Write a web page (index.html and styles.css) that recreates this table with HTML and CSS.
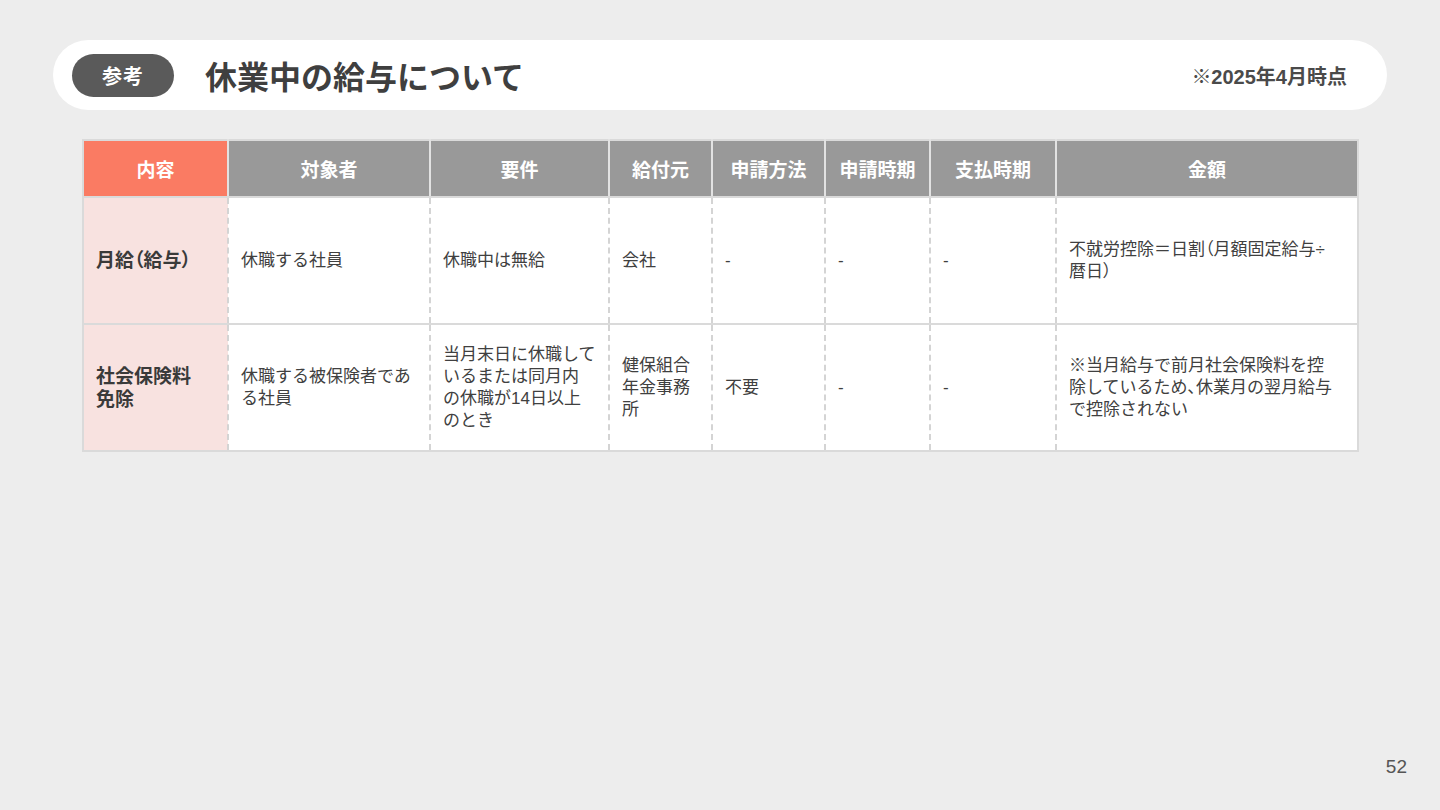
FILE: index.html
```html
<!DOCTYPE html>
<html lang="ja">
<head>
<meta charset="utf-8">
<link rel="stylesheet" href="styles.css">
</head>
<body>
<div class="slide">
  <header class="topbar">
    <span class="badge">参考</span>
    <h1 class="title">休業中の給与について</h1>
    <span class="note">※2025年4月時点</span>
  </header>
  <div class="table-wrap">
    <table class="grid">
      <colgroup>
        <col class="c1"><col class="c2"><col class="c3"><col class="c4"><col class="c5"><col class="c6"><col class="c7"><col class="c8">
      </colgroup>
      <thead>
        <tr>
          <th class="accent">内容</th>
          <th>対象者</th>
          <th>要件</th>
          <th>給付元</th>
          <th>申請方法</th>
          <th>申請時期</th>
          <th>支払時期</th>
          <th>金額</th>
        </tr>
      </thead>
      <tbody>
        <tr>
          <td class="label">月給<span class="p">（</span>給与<span class="p">）</span></td>
          <td>休職する社員</td>
          <td>休職中は無給</td>
          <td>会社</td>
          <td>-</td>
          <td>-</td>
          <td>-</td>
          <td>不就労控除＝日割<span class="p">（</span>月額固定給与÷<br>暦日<span class="p">）</span></td>
        </tr>
        <tr>
          <td class="label">社会保険料<br>免除</td>
          <td>休職する被保険者であ<br>る社員</td>
          <td>当月末日に休職して<br>いるまたは同月内<br>の休職が14日以上<br>のとき</td>
          <td>健保組合<br>年金事務<br>所</td>
          <td>不要</td>
          <td>-</td>
          <td>-</td>
          <td>※当月給与で前月社会保険料を控<br>除しているため<span class="p">、</span>休業月の翌月給与<br>で控除されない</td>
        </tr>
      </tbody>
    </table>
  </div>
  <div class="page-num">52</div>
</div>
</body>
</html>
```

FILE: styles.css
```css
* { box-sizing: border-box; }
html, body {
  margin: 0;
  padding: 0;
  background: #ededed;
}
body {
  font-family: "Liberation Sans", "Noto Sans CJK JP", sans-serif;
  color: #404040;
}
.slide {
  width: 1440px;
  height: 810px;
  padding: 40px 33px 32px 53px;
  display: flex;
  flex-direction: column;
}
.topbar {
  width: 1334px;
  height: 70px;
  background: #ffffff;
  border-radius: 35px;
  display: flex;
  align-items: center;
  padding: 0 40px 0 19px;
}
.badge {
  width: 102px;
  height: 43px;
  border-radius: 22px;
  background: #5a5a5a;
  color: #ffffff;
  font-weight: bold;
  font-size: 20px;
  display: flex;
  align-items: center;
  justify-content: center;
  letter-spacing: 1px;
}
.title {
  margin: 0 0 0 31px;
  font-size: 32px;
  font-weight: bold;
  color: #3f3f3f;
  flex: 1;
}
.note {
  font-size: 20px;
  font-weight: bold;
  color: #4a4a4a;
}
.table-wrap {
  width: 1334px;
  padding: 29px 30px 0 29px;
}
.grid {
  width: 1275px;
  table-layout: fixed;
  border-collapse: collapse;
  border: 2px solid #dadada;
  background: #ffffff;
}
.c1 { width: 145px; }
.c2 { width: 202px; }
.c3 { width: 179px; }
.c4 { width: 103px; }
.c5 { width: 113px; }
.c6 { width: 105px; }
.c7 { width: 126px; }
.c8 { width: 302px; }
.grid th {
  height: 57px;
  background: #999999;
  color: #ffffff;
  font-size: 19px;
  font-weight: bold;
  text-align: center;
  border-left: 2px solid #e2e2e2;
  border-bottom: 2px solid #dadada;
  padding: 0;
}
.grid th.accent {
  background: #fa7b63;
  border-left: none;
}
.grid td {
  height: 127px;
  padding: 0 12px;
  font-size: 17px;
  line-height: 22px;
  vertical-align: middle;
  color: #404040;
  border-left: 2px dashed #d4d4d4;
  border-top: 2px solid #dadada;
  white-space: nowrap;
}
.grid td .p {
  font-feature-settings: "palt";
}
.grid td.label {
  background: #f8e2e0;
  font-size: 19px;
  font-weight: bold;
  line-height: 23px;
  color: #3a3a3a;
  border-left: none;
}
.page-num {
  margin-top: auto;
  align-self: flex-end;
  font-size: 19px;
  color: #555555;
}
```
